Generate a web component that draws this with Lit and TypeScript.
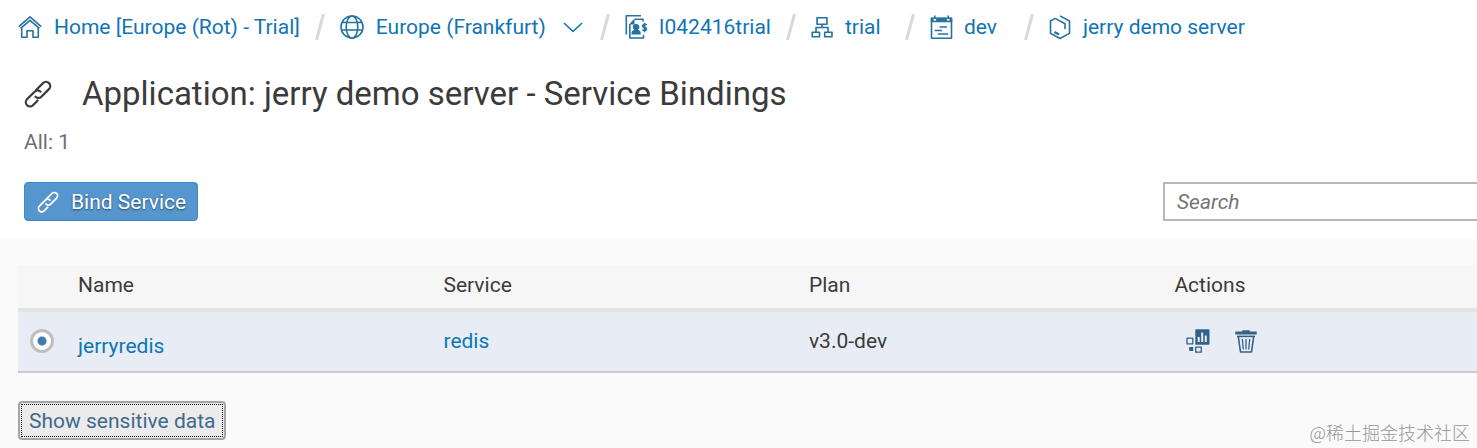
import { LitElement, html, css, svg, nothing } from "lit";
import { customElement, property, state } from "lit/decorators.js";

const glyphs: Record<string, unknown> = {
  home: svg`<path d="M.8 11.6 12 1.9l11.2 9.700"/><path d="M2.600 13.300 12 5.300l9.400 8"/><path d="M3.700 12.600V22.200h5.300v-6.400h6v6.400h5.300v-9.600"/>`,
  globe: svg`<circle cx="12" cy="12" r="11"/><ellipse cx="12" cy="12" rx="5.800" ry="11"/><path d="M2.400 7.500h19.200M1.500 15h21"/>`,
  account: svg`<path d="M1.300 19.500V.8H16"/><path d="M9.500 4.300h8.500V6.500M4.800 9v14h13.700v-3"/><path class="solid" d="M4 9.500 9.500 3.500v6zM6.500 19.400v-1.700c0-1.500 1.500-2.300 3-2.600a3.300 3.300 0 1 1 3.200 0c1.500.3 3 1.100 3 2.600v1.700z"/><path d="M21.500 10.200c-.5-1-4-1.300-4 .7 0 2 4 1 4 3s-3.700 1.800-4.200.6M19.500 7.800v9.400"/>`,
  org: svg`<path d="M6 2.800h10v6.400H6zM11 9.200v3.300M5 17v-4.500h12V17M1.200 17.200h7.300v4.500H1.200zM13.700 17.200H21v4.500h-7.300z"/>`,
  space: svg`<path d="M1.500 3.200h20V23.200h-20z"/><path class="solid" d="M.8 2.800h2.500v1.500a1.500 1.500 0 0 0 3 0V2.800h10.400v1.500a1.500 1.500 0 0 0 3 0V2.800h2.500v4.400H.8z"/><path d="M4.800.6v3.400M18.200.6v3.400"/><path d="M9.500 12h7.500M4.700 15.500H12M8 19h10"/>`,
  app: svg`<path d="M11 .9 20.500 6v12.400L11 23.500 1.500 18.400V6l4.700-2.600"/><path d="m6.200 3.400 9.800 5.300v5.300"/><path class="bold" d="m5.500 17 4.500 2.500"/>`,
  chevron: svg`<path d="m3 8 9 8.500L21 8"/>`,
  link: svg`<path class="medium" d="M10.400 8.600 16.300 2.700a3.600 3.600 0 0 1 5.100 5.100l-6.500 6.500a3.600 3.600 0 0 1-5.100 0"/><path class="medium" d="M14.200 10a3.600 3.600 0 0 0-5.100 0l-6.500 6.500a3.600 3.600 0 0 0 5.100 5.100l4-4"/>`,
  metrics: svg`<path class="solid" fill-rule="evenodd" d="M9.300 1.200q0-1 1-1H22.500q1 0 1 1v13.600q0 1-1 1H9.300zM11.700 8v5h2V8zm3.500-4.500V13h2V3.500zm3.600 3V13h2V6.500zM3.200 18h4v4h-4z"/><path class="thin" d="M1 9.200h5.800v5.600H1zM9.700 18.200h5.600v5H9.700z"/>`,
  trash: svg`<path class="solid" d="M1.300 2.600h7V1.300h7.400v1.300h7v2.800H1.300z"/><path d="M3 7.400h18"/><path d="M4.300 7.500 6.500 23h11l2.200-15.500"/><path class="thin" d="M8.300 10l1 10.500M12 10v10.500M15.700 10l-1 10.500"/>`,
};

const narrowGlyphs = new Set(["account", "org", "space", "app"]);

@customElement("ui-icon")
class UiIcon extends LitElement {
  static styles = css`
    :host { display: inline-flex; flex: none; height: 24px; }
    svg {
      height: 100%; fill: none; stroke: currentColor; overflow: visible;
      stroke-width: 1.6; stroke-linejoin: round;
    }
    .solid { fill: currentColor; stroke: none; }
    .thin { stroke-width: 1.3; }
    .medium { stroke-width: 1.9; stroke-linecap: round; }
    .bold { stroke-width: 2.4; }
  `;
  @property() name = "";
  render() {
    const width = narrowGlyphs.has(this.name) ? 22 : 24;
    return html`<svg viewBox="0 0 ${width} 24" aria-hidden="true">${glyphs[this.name]}</svg>`;
  }
}

interface Crumb { icon: string; label: string; menu?: boolean }

@customElement("crumb-trail")
class CrumbTrail extends LitElement {
  static styles = css`
    :host { display: block; }
    ol {
      display: flex; align-items: center; list-style: none;
      margin: 0; padding: 0 18px; height: 54px; white-space: nowrap;
    }
    li { display: flex; align-items: center; }
    .entry { display: flex; align-items: center; min-width: 79px; }
    a { display: flex; align-items: center; gap: 12px; color: #0f75b5; text-decoration: none; line-height: 24px; }
    a ui-icon { color: #23729f; }
    button { display: flex; padding: 0; margin-left: 15px; border: 0; background: none; color: #0f75b5; }
    .slash { width: 10px; height: 26px; margin: 0 15px; flex: none; stroke: #d9d9d9; stroke-width: 3; }
  `;
  @property({ attribute: false }) items: Crumb[] = [];
  render() {
    return html`<nav aria-label="Breadcrumb"><ol>
      ${this.items.map((c, i) => html`<li>
        ${i ? html`<svg class="slash" viewBox="0 0 10 26" aria-hidden="true"><path d="M8.500 0 1.500 26" /></svg>` : nothing}
        <span class="entry">
          <a href="#"><ui-icon name=${c.icon}></ui-icon>${c.label}</a>
          ${c.menu ? html`<button aria-label="Switch region"><ui-icon name="chevron"></ui-icon></button>` : nothing}
        </span>
      </li>`)}
    </ol></nav>`;
  }
}

@customElement("app-root")
class AppRoot extends LitElement {
  static styles = css`
    :host {
      display: flex; flex-direction: column; position: relative; min-height: 100vh;
      overflow: hidden; background: #fff; color: #3b3b3b;
      font: 21px/24px Roboto, "Noto Sans", sans-serif;
    }
    button, input { font: inherit; }
    a { color: #0f75b5; text-decoration: none; }
    .title { display: flex; align-items: center; gap: 30px; padding: 0 24px; height: 80px; }
    .title ui-icon { width: 28px; height: 28px; }
    h1 { margin: 0; font-size: 33px; line-height: 40px; font-weight: 400; }
    .count { margin: -4px 0 0; padding: 0 24px; color: #707070; }
    .toolbar {
      display: flex; align-items: center; justify-content: space-between;
      padding: 28px 0 18px 24px;
    }
    .bind {
      display: flex; align-items: center; gap: 12px; height: 39px; padding: 0 11px 0 12px;
      border: 1px solid #4288c4; border-radius: 4px; background: #5496cd; color: #fff;
      text-shadow: 0 1px 2px rgb(0 0 0 / 50%);
    }
    .bind ui-icon { width: 22px; height: 22px; }
    .search {
      box-sizing: border-box; width: 314px; height: 39px; padding: 0 12px; border: 2px solid #b8b8b8;
      border-right: 0; border-radius: 0; background: #fff; color: #333;
    }
    .search::placeholder { color: #757575; opacity: 1; font-style: italic; }
    main { flex: 1; padding: 26px 0 8px 18px; background: #fafafa; }
    table { width: 100%; table-layout: fixed; border-collapse: separate; border-spacing: 0; }
    .pick { width: 50px; }
    .wide { width: 25.05%; }
    th, td { box-sizing: border-box; text-align: left; font-weight: 400; padding: 0 10px 2px; }
    th { height: 47px; padding-bottom: 4px; background: #f6f6f6; border-bottom: 4px solid #e3e3e3; }
    td { height: 61px; background: #e8edf5; border-bottom: 2px solid #c6c9cf; }
    .name { padding-top: 10px; }
    .radio {
      appearance: none; display: block; box-sizing: border-box; width: 24px; height: 24px; margin: 0 2px;
      border: 3px solid #bfbfbf; border-radius: 50%; background: #fff;
    }
    .radio:checked { background: radial-gradient(circle, #3c7cae 4px, #fff 5px); }
    .actions { display: flex; gap: 24px; padding-left: 12px; }
    .actions button { display: flex; padding: 0; border: 0; background: none; color: #346187; }
    .reveal {
      display: block; height: 39px; margin-top: 28px; padding: 0 9px; color: #41698c; background: #ebebeb;
      border: 2px solid #a6a6a6; border-radius: 4px; outline: 1px dotted #000; outline-offset: -4px;
    }
    .mark {
      position: absolute; right: 7px; bottom: 4px; color: #969696;
      font: 300 18px/24px "Noto Sans CJK SC", sans-serif;
    }
  `;
  @state() private selected = "jerryredis";
  private crumbs: Crumb[] = [
    { icon: "home", label: "Home [Europe (Rot) - Trial]" },
    { icon: "globe", label: "Europe (Frankfurt)", menu: true },
    { icon: "account", label: "I042416trial" },
    { icon: "org", label: "trial" },
    { icon: "space", label: "dev" },
    { icon: "app", label: "jerry demo server" },
  ];
  private bindings = [{ name: "jerryredis", service: "redis", plan: "v3.0-dev" }];
  render() {
    return html`
      <crumb-trail .items=${this.crumbs}></crumb-trail>
      <header class="title"><ui-icon name="link"></ui-icon><h1>Application: jerry demo server - Service Bindings</h1></header>
      <p class="count">All: ${this.bindings.length}</p>
      <div class="toolbar">
        <button class="bind"><ui-icon name="link"></ui-icon>Bind Service</button>
        <input class="search" type="text" placeholder="Search" aria-label="Search" />
      </div>
      <main>
        <table>
          <colgroup><col class="pick" /><col class="wide" /><col class="wide" /><col class="wide" /><col /></colgroup>
          <thead><tr><th></th><th>Name</th><th>Service</th><th>Plan</th><th>Actions</th></tr></thead>
          <tbody>${this.bindings.map((b) => html`<tr>
            <td><input class="radio" type="radio" name="binding" aria-label=${b.name}
              .checked=${this.selected === b.name} @change=${() => (this.selected = b.name)} /></td>
            <td class="name"><a href="#">${b.name}</a></td>
            <td><a href="#">${b.service}</a></td>
            <td>${b.plan}</td>
            <td><div class="actions">
              <button aria-label="Open dashboard"><ui-icon name="metrics"></ui-icon></button>
              <button aria-label="Delete binding"><ui-icon name="trash"></ui-icon></button>
            </div></td>
          </tr>`)}</tbody>
        </table>
        <button class="reveal">Show sensitive data</button>
      </main>
      <span class="mark">@稀土掘金技术社区</span>`;
  }
}
